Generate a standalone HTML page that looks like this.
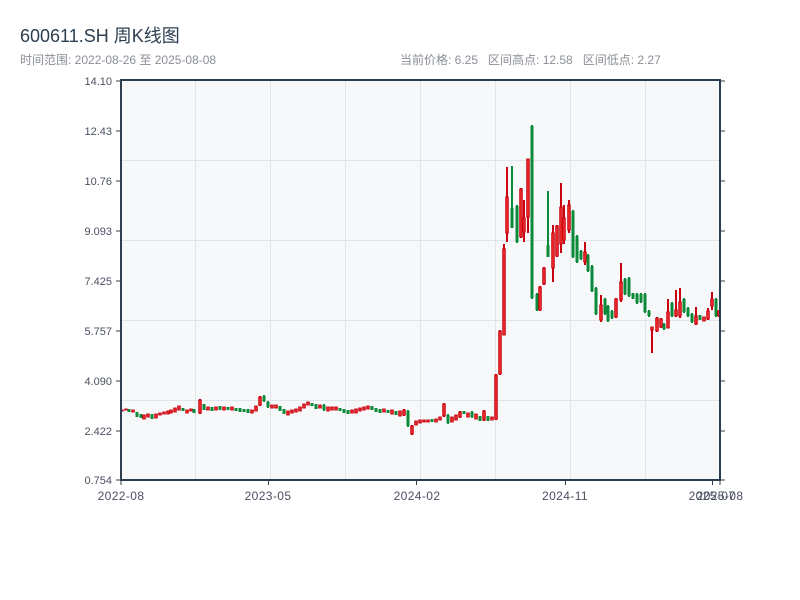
<!DOCTYPE html>
<html><head><meta charset="utf-8"><style>
html,body{margin:0;padding:0;background:#fff;width:800px;height:600px;overflow:hidden}
body{font-family:"Liberation Sans","Noto Sans CJK SC",sans-serif;position:relative}
.t{position:absolute;left:20px;top:22px;font-size:18px;color:#2c3e50}
.s{position:absolute;left:20px;top:51px;font-size:12px;color:#8a8f96}
.r{position:absolute;left:400px;top:51px;font-size:12px;color:#8a8f96;word-spacing:0}
svg{position:absolute;left:0;top:0}
</style></head><body>
<div class="t">600611.SH 周K线图</div>
<div class="s">时间范围: 2022-08-26 至 2025-08-08</div>
<div class="r">当前价格: 6.25&nbsp;&nbsp; 区间高点: 12.58&nbsp;&nbsp; 区间低点: 2.27</div>
<svg id="c" width="800" height="600" xmlns="http://www.w3.org/2000/svg" font-family="Liberation Sans, sans-serif">
<rect x="121" y="80" width="599" height="400" fill="#f7f8fa"/>
<g stroke="#e1e4e8" stroke-width="1">
<line x1="195.5" y1="80" x2="195.5" y2="480"/><line x1="270.5" y1="80" x2="270.5" y2="480"/>
<line x1="345.5" y1="80" x2="345.5" y2="480"/><line x1="420.5" y1="80" x2="420.5" y2="480"/>
<line x1="495.5" y1="80" x2="495.5" y2="480"/><line x1="570.5" y1="80" x2="570.5" y2="480"/>
<line x1="645.5" y1="80" x2="645.5" y2="480"/>
<line x1="121" y1="160.5" x2="720" y2="160.5"/><line x1="121" y1="240.5" x2="720" y2="240.5"/>
<line x1="121" y1="320.5" x2="720" y2="320.5"/><line x1="121" y1="400.5" x2="720" y2="400.5"/>
</g>
<g id="k"></g>
<g stroke="#2c3e50" stroke-width="2" fill="none">
<line x1="120" y1="80" x2="721" y2="80"/>
<line x1="121" y1="80" x2="121" y2="481"/>
<line x1="720" y1="80" x2="720" y2="481"/>
<line x1="120" y1="480" x2="721" y2="480"/>
</g>
<g stroke="#2c3e50" stroke-width="1">
<line x1="116" y1="81" x2="121" y2="81"/><line x1="116" y1="131" x2="121" y2="131"/><line x1="116" y1="181" x2="121" y2="181"/><line x1="116" y1="231" x2="121" y2="231"/><line x1="116" y1="281" x2="121" y2="281"/><line x1="116" y1="331" x2="121" y2="331"/><line x1="116" y1="381" x2="121" y2="381"/><line x1="116" y1="431" x2="121" y2="431"/><line x1="116" y1="480" x2="121" y2="480"/>
<line x1="720" y1="81" x2="725" y2="81"/><line x1="720" y1="131" x2="725" y2="131"/><line x1="720" y1="181" x2="725" y2="181"/><line x1="720" y1="231" x2="725" y2="231"/><line x1="720" y1="281" x2="725" y2="281"/><line x1="720" y1="331" x2="725" y2="331"/><line x1="720" y1="381" x2="725" y2="381"/><line x1="720" y1="431" x2="725" y2="431"/><line x1="720" y1="480" x2="725" y2="480"/>
<line x1="121" y1="480" x2="121" y2="485"/><line x1="268.5" y1="480" x2="268.5" y2="485"/><line x1="416.5" y1="480" x2="416.5" y2="485"/><line x1="565.5" y1="480" x2="565.5" y2="485"/><line x1="712.5" y1="480" x2="712.5" y2="485"/><line x1="720" y1="480" x2="720" y2="485"/>
</g>
<g font-size="11" fill="#4a5060" text-anchor="end">
<text x="112" y="85">14.10</text><text x="112" y="135">12.43</text><text x="112" y="185">10.76</text><text x="112" y="235">9.093</text><text x="112" y="285">7.425</text><text x="112" y="335">5.757</text><text x="112" y="385">4.090</text><text x="112" y="435">2.422</text><text x="112" y="484">0.754</text>
</g>
<g font-size="12" fill="#4a5060" text-anchor="middle" letter-spacing="0.4">
<text x="121" y="500">2022-08</text><text x="268" y="500">2023-05</text><text x="417" y="500">2024-02</text><text x="565" y="500">2024-11</text><text x="712" y="500">2025-07</text><text x="720" y="500">2025-08</text>
</g>
</svg>
<script>
var d=[
[122,410,411,'r'],[126,409,410,'r'],[129,409,412,'g'],[133,410,412,'r'],[137,412,417,'g'],[141,414,418,'g'],[144,415,419,'r'],[148,414,417,'r'],[152,414,419,'g'],[156,414,418,'r'],[160,413,415,'r'],[164,412,414,'r'],[168,411,414,'r'],[171,410,413,'r'],[175,408,412,'r'],[179,406,410,'r'],[183,408,411,'g'],[187,410,413,'r'],[191,409,411,'r'],[194,409,413,'g'],[200,399,414,'r'],[204,404,410,'g'],[208,407,410,'r'],[212,407,411,'g'],[216,407,410,'r'],[220,406,410,'g'],[224,407,410,'r'],[228,407,410,'g'],[232,407,410,'r'],[236,408,411,'g'],[240,408,412,'g'],[244,409,412,'g'],[248,409,413,'g'],[252,410,413,'r'],[256,406,411,'r'],[260,396,406,'r'],[264,395,402,'g'],[268,401,408,'g'],[272,405,408,'r'],[276,405,408,'r'],[280,406,411,'g'],[284,409,414,'g'],[288,411,415,'r'],[292,410,413,'r'],[296,409,412,'r'],[300,407,411,'r'],[304,404,408,'r'],[308,402,405,'r'],[312,403,406,'g'],[316,404,409,'g'],[320,405,408,'r'],[324,404,411,'g'],[328,407,411,'r'],[332,407,410,'r'],[336,407,410,'r'],[340,408,411,'g'],[344,409,413,'g'],[348,410,414,'g'],[352,410,413,'r'],[356,409,413,'r'],[360,408,411,'r'],[364,407,410,'r'],[368,406,409,'r'],[372,406,410,'g'],[376,408,412,'g'],[380,409,413,'g'],[384,409,412,'r'],[388,410,413,'g'],[392,410,414,'r'],[396,411,415,'g'],[400,411,416,'r'],[404,409,416,'r'],[408,410,427,'g'],[412,425,435,'r'],[416,421,425,'r'],[420,420,423,'r'],[424,420,422,'r'],[428,420,422,'r'],[432,419,422,'g'],[436,419,422,'r'],[440,417,420,'r'],[444,403,417,'r'],[448,414,424,'g'],[452,417,422,'r'],[456,415,420,'r'],[460,411,418,'r'],[464,411,414,'g'],[468,413,417,'r'],[472,411,418,'g'],[476,414,419,'r'],[480,416,421,'g'],[484,410,421,'r'],[488,416,421,'g'],[492,417,420,'r'],[496,374,420,'r'],
[500,330,375,'r'],[504,244,335,'r',249],[507,167,242,'r',197,233],[512,166,228,'g',208],[517,205,243,'g'],[521,188,238,'r'],[524,200,242,'r',218,232],[528,159,233,'r',159,217],[532,125,299,'g'],[537,293,311,'g'],[540,286,311,'r'],[544,267,285,'r'],[548,191,257,'g',245,257],[553,225,282,'r',233,268],[557,225,257,'r'],[561,183,253,'r',207,244],[564,205,244,'r',218,240],[569,200,233,'r',205,230],[573,210,258,'g'],[577,235,263,'g'],[581,250,260,'g'],[585,242,265,'r',252,262],[588,254,272,'g'],[592,265,292,'g'],[596,287,315,'g'],[601,295,322,'r',305,320],[605,298,315,'g'],[608,305,322,'g'],[612,310,319,'g'],[616,298,318,'r'],[621,263,302,'r',282,300],[625,278,295,'g'],[629,277,297,'g'],[633,293,299,'g'],[637,293,304,'g'],[641,293,303,'g'],[645,293,313,'g'],[649,310,317,'g'],
[652,327,353,'r',327,330],[657,317,332,'r'],[661,318,328,'r'],[664,323,330,'g'],[668,299,328,'r',312,328],[672,302,317,'g'],[676,290,317,'r',310,316],[680,288,318,'r',302,316],[684,298,313,'g'],[688,307,317,'g'],[692,313,323,'g'],[696,307,325,'r',316,324],[700,315,320,'g'],[704,317,321,'r'],[708,308,320,'r',311,319],[712,292,310,'r',299,306],[716,298,317,'g'],[719,310,317,'r']
];
var s='';
d.forEach(function(c){
 var x=c[0],h=c[1],l=c[2],col=c[3]=='r'?'#c8000f':'#0b8a3a';
 var bt=c[4]!==undefined?c[4]:h, bb=c[5]!==undefined?c[5]:l;
 if(c[4]===undefined && l-h>6){bt=h+1;bb=l-1;}
 s+='<rect x="'+(x-1)+'" y="'+h+'" width="2" height="'+(l-h)+'" fill="'+col+'"/>';
 if(c[3]=='r') s+='<rect x="'+(x-1.3)+'" y="'+bt+'" width="2.6" height="'+Math.max(1,bb-bt)+'" fill="#ec2a2a" stroke="#c8000f" stroke-width="0.9"/>';
 else s+='<rect x="'+(x-1.5)+'" y="'+bt+'" width="3" height="'+Math.max(1,bb-bt)+'" fill="'+col+'"/>';
});
document.getElementById('k').innerHTML=s;
</script>
</body></html>
